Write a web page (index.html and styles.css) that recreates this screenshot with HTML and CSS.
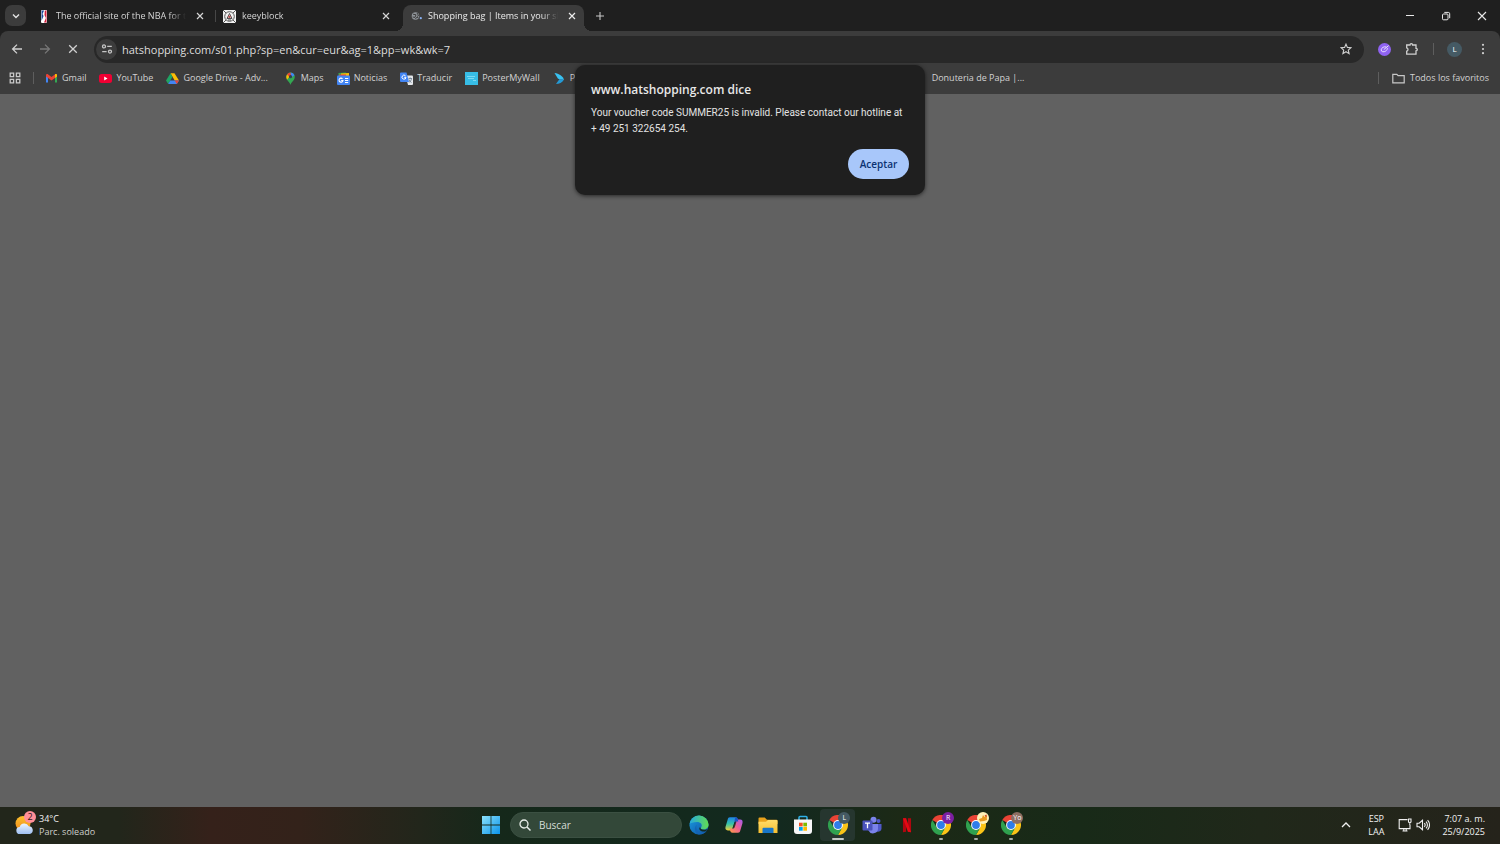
FILE: index.html
```html
<!DOCTYPE html>
<html lang="es">
<head>
<meta charset="utf-8">
<title>Shopping bag | Items in your shopping bag</title>
<link rel="stylesheet" href="styles.css">
</head>
<body>
<svg class="defs" aria-hidden="true">
  <defs>
    <linearGradient id="win" x1="0" y1="0" x2="1" y2="1"><stop offset="0" stop-color="#8be2fc"/><stop offset="1" stop-color="#0a93ea"/></linearGradient>
    <linearGradient id="edgeTop" x1="0" y1="0" x2="1" y2="0"><stop offset="0" stop-color="#25a8e0"/><stop offset="1" stop-color="#62dc4f"/></linearGradient>
    <linearGradient id="edgeLow" x1="0" y1="0" x2="1" y2="1"><stop offset="0" stop-color="#1b9de2"/><stop offset="1" stop-color="#0d4fa0"/></linearGradient>
    <linearGradient id="copA" x1="0" y1="0" x2="0" y2="1"><stop offset="0" stop-color="#1f83e6"/><stop offset=".5" stop-color="#35c3a8"/><stop offset="1" stop-color="#f2cf35"/></linearGradient>
    <linearGradient id="copB" x1="1" y1="0" x2="0" y2="1"><stop offset="0" stop-color="#a55cf0"/><stop offset=".5" stop-color="#ef5f92"/><stop offset="1" stop-color="#ff9f45"/></linearGradient>
    <linearGradient id="fold" x1="0" y1="0" x2="0" y2="1"><stop offset="0" stop-color="#ffdc6b"/><stop offset="1" stop-color="#f7bf2f"/></linearGradient>
    <linearGradient id="cloud" x1="0" y1="0" x2="0" y2="1"><stop offset="0" stop-color="#eef5ff"/><stop offset="1" stop-color="#9fc0f3"/></linearGradient>
    <linearGradient id="sun" x1="0" y1="0" x2="0" y2="1"><stop offset="0" stop-color="#fbc02d"/><stop offset="1" stop-color="#f28a1c"/></linearGradient>
  </defs>
  <symbol id="close" viewBox="0 0 10 10"><path d="M2 2l6 6M8 2l-6 6" fill="none" stroke="currentColor" stroke-width="1.2"/></symbol>
  <symbol id="chrome" viewBox="0 0 20 20">
    <path d="M10 10L1.3 5A10 10 0 0 1 18.7 5z" fill="#ea4335"/>
    <path d="M10 5.2H18.8A10 10 0 0 1 10 20L14.2 12.4z" fill="#fbc417"/>
    <path d="M1.3 5L5.8 12.4 10 14.8 14.200 12.600 10 20A10 10 0 0 1 1.3 5z" fill="#2fa14f"/>
    <circle cx="10" cy="10" r="4.9" fill="#fff"/><circle cx="10" cy="10" r="3.9" fill="#2f7de9"/>
  </symbol>
</svg>
<div class="screen">
  <header class="browser">
    <div class="tabstrip">
      <button class="tab-search" aria-label="Buscar pestañas"><svg viewBox="0 0 10 10" width="10" height="10"><path d="M2 3.6l3 3 3-3" fill="none" stroke="#e3e3e3" stroke-width="1.4"/></svg></button>
      <div class="tab">
        <svg class="favicon" viewBox="0 0 13 13"><rect x="3" y="0" width="6" height="13" rx="1" fill="#fff"/><path d="M3.500 .4h2.6L4.500 4l1 2-2 5z" fill="#1d4c9c"/><path d="M6.800.4h1.700v12H6L7.900 8 6.500 5z" fill="#d21f3c"/></svg>
        <span class="tab-title">The official site of the NBA for the latest</span>
        <button class="tab-close" aria-label="Cerrar"><svg width="10" height="10"><use href="#close"/></svg></button>
      </div>
      <div class="tab divided">
        <svg class="favicon" viewBox="0 0 13 13"><rect width="13" height="13" fill="#f1f1f1"/><circle cx="6.5" cy="6.5" r="4.8" fill="none" stroke="#555" stroke-width="1"/><path d="M0 0l3 3M13 0l-3 3M0 13l3-3M13 13l-3-3M4 8.5l2.5-5 2.5 5zM5 10h3" fill="none" stroke="#444" stroke-width=".9"/><circle cx="6.5" cy="6.8" r="1.3" fill="#b84b4b"/></svg>
        <span class="tab-title">keeyblock</span>
        <button class="tab-close" aria-label="Cerrar"><svg width="10" height="10"><use href="#close"/></svg></button>
      </div>
      <div class="tab active">
        <svg class="favicon" viewBox="0 0 13 13"><circle cx="5.5" cy="6" r="3.8" fill="#8f9499"/><path d="M3 4.2l3 .6L5 7.4 2.6 7M7 3l1.6 2.6L7 6.4M5.5 9l1-1.6 2 .4" fill="none" stroke="#3c3c3c" stroke-width="1"/><circle cx="10.8" cy="8.2" r="1.1" fill="#8ab4f8"/></svg>
        <span class="tab-title">Shopping bag | Items in your shopping bag</span>
        <button class="tab-close" aria-label="Cerrar"><svg width="10" height="10"><use href="#close"/></svg></button>
      </div>
      <button class="new-tab" aria-label="Nueva pestaña"><svg viewBox="0 0 10 10" width="10" height="10"><path d="M5 1v8M1 5h8" stroke="#c7c7c7" stroke-width="1.1"/></svg></button>
      <div class="window-controls">
        <button aria-label="Minimizar"><svg viewBox="0 0 10 10" width="10" height="10"><path d="M1 4.500h8" stroke="#e8e8e8"/></svg></button>
        <button aria-label="Restaurar"><svg viewBox="0 0 10 10" width="10" height="10"><rect x="1.5" y="3" width="5.5" height="5.8" rx="1" fill="none" stroke="#e8e8e8"/><path d="M3.3 1.4h4a1.4 1.4 0 0 1 1.4 1.4v4.4" fill="none" stroke="#e8e8e8"/></svg></button>
        <button aria-label="Cerrar"><svg viewBox="0 0 10 10" width="10" height="10"><path d="M1 1l8 8M9 1L1 9" stroke="#e8e8e8" stroke-width="1.1"/></svg></button>
      </div>
    </div>
    <div class="toolbar">
      <button class="nav" aria-label="Atrás"><svg viewBox="0 0 12 12" width="12" height="12"><path d="M11 6H2M6 1.6L1.6 6 6 10.4" fill="none" stroke="#d0d0d0" stroke-width="1.3"/></svg></button>
      <button class="nav" aria-label="Adelante"><svg viewBox="0 0 12 12" width="12" height="12"><path d="M1 6h9M6 1.6L10.4 6 6 10.4" fill="none" stroke="#777" stroke-width="1.3"/></svg></button>
      <button class="nav" aria-label="Detener"><svg viewBox="0 0 12 12" width="12" height="12"><path d="M2.2 2.2l7.6 7.6M9.8 2.2L2.2 9.8" stroke="#d0d0d0" stroke-width="1.3"/></svg></button>
      <div class="omnibox">
        <button class="site-info" aria-label="Información del sitio"><svg viewBox="0 0 12 12" width="12" height="12" fill="none" stroke="#c7c7c7" stroke-width="1.3"><circle cx="3" cy="3.4" r="1.5"/><path d="M6.2 3.4h4.6M1.2 8.6h4.4"/><circle cx="9" cy="8.6" r="1.5"/></svg></button>
        <input class="url" aria-label="Dirección" value="hatshopping.com/s01.php?sp=en&amp;cur=eur&amp;ag=1&amp;pp=wk&amp;wk=7">
        <button class="star" aria-label="Añadir a favoritos"><svg viewBox="0 0 12 12" width="12" height="12"><path d="M6 1.1l1.4 3.3 3.6.3-2.7 2.4.8 3.5L6 8.7l-3.1 1.9.8-3.5L1 4.7l3.6-.3z" fill="none" stroke="#d0d0d0" stroke-width="1.1"/></svg></button>
      </div>
      <button class="tool" aria-label="Extensión"><svg viewBox="0 0 13 13" width="13" height="13"><circle cx="6.5" cy="6.5" r="6.5" fill="#9063f2"/><path d="M10.600 2.600L5.800 6.600M8.200 4c-2.200-.8-4.800.8-5 2.800-.2 2.200 2.800 2.600 4.600 1.200 1-.8 1.800-2 1.600-3" fill="none" stroke="#e9dfff" stroke-width="1"/></svg></button>
      <button class="tool" aria-label="Extensiones"><svg viewBox="0 0 14 14" width="14" height="14"><path d="M1.700 3h3.300a1.300 1.300 0 0 1 2.600 0H11v3.300a1.300 1.300 0 0 1 0 2.600v3.300H1.700V9.200a1.700 1.700 0 0 0 0-3.300z" fill="none" stroke="#d0d0d0" stroke-width="1.300"/></svg></button>
      <span class="rule"></span>
      <button class="avatar" aria-label="Perfil">L</button>
      <button class="more" aria-label="Menú"><svg viewBox="0 0 12 12" width="12" height="12" fill="#d0d0d0"><circle cx="6" cy="1.800" r="1.100"/><circle cx="6" cy="6" r="1.100"/><circle cx="6" cy="10.200" r="1.100"/></svg></button>
    </div>
    <nav class="bookmarks">
      <button class="apps" aria-label="Aplicaciones"><svg viewBox="0 0 12 12" width="12" height="12" fill="none" stroke="#c7c7c7" stroke-width="1.300"><path d="M1.200 1.200h3.400v3.400H1.200zM7.400 1.200h3.400v3.400H7.400zM1.200 7.400h3.400v3.400H1.200zM7.400 7.400h3.400v3.400H7.400z"/></svg></button>
      <span class="rule"></span>
      <a class="mark" href="#"><svg viewBox="0 0 13 13"><path d="M1 10.500V3.500l2 1.500v5.500z" fill="#4285f4"/><path d="M12 10.500V3.500L10 5v5.500z" fill="#34a853"/><path d="M1 4.500V3.300C1 2 2.400 1.800 3.200 2.400L6.500 5l3.300-2.600c.8-.6 2.200-.4 2.200.9v1.200L6.500 8.500z" fill="#ea4335"/><path d="M10 2.300c.9-.6 2-.2 2 1v1.200L10 6z" fill="#fbbc04"/></svg>Gmail</a>
      <a class="mark" href="#"><svg viewBox="0 0 13 13"><rect y="2" width="13" height="9" rx="2.500" fill="#f00033"/><path d="M5.200 4.600v3.800L8.500 6.500z" fill="#fff"/></svg>YouTube</a>
      <a class="mark last-wide" href="#"><svg viewBox="0 0 13 13"><path d="M4.500 1.200h4L13 8.500H8.700z" fill="#fbbc04"/><path d="M4.500 1.200L6.500 4.700 2.200 12 0 8.600z" fill="#1fa463"/><path d="M4.200 8.500H13L10.800 12H2.200z" fill="#4285f4"/><path d="M8.700 8.500H13L10.800 12z" fill="#ea4335"/></svg>Google Drive - Adv...</a>
      <a class="mark" href="#"><svg viewBox="0 0 13 13"><path d="M6.500 13C6 10 2.200 8.600 2.200 4.800A4.300 4.300 0 0 1 10.800 4.800C10.800 8.600 7 10 6.500 13z" fill="#34a853"/><path d="M6.500.5a4.300 4.300 0 0 1 4 2.800L6.500 6z" fill="#4285f4"/><path d="M3 2.400A4.300 4.300 0 0 1 6.500.5L7 4 5 6z" fill="#ea4335"/><path d="M3 2.400l2.400 2.300-2.400 3a5 5 0 0 1 0-5.300z" fill="#fbbc04"/><circle cx="6.500" cy="4.700" r="1.600" fill="#35424a"/></svg>Maps</a>
      <a class="mark" href="#"><svg viewBox="0 0 13 13"><path d="M1.500 1l7-.6 3 1.600V6h-10z" fill="#34a853"/><path d="M4 1.500l8-.5v4H4z" fill="#fbbc04"/><path d="M2 2.500h7V5H2z" fill="#ea4335"/><rect y="3.500" width="13" height="9.500" rx="1" fill="#4285f4"/><path d="M5.500 6.800A2 2 0 1 0 6 8.500H4.200M8 6.500h3.200M8 8.500h3.200M8 10.500h3.200" fill="none" stroke="#fff" stroke-width="1.100"/></svg>Noticias</a>
      <a class="mark" href="#"><svg viewBox="0 0 13 13"><path d="M5.500 3.500H12a1 1 0 0 1 1 1V12a1 1 0 0 1-1 1H8z" fill="#e4e7eb"/><path d="M8.500 6.500h3.500M10.200 5.500v1M9 7.500c.4 1.400 1.300 2.300 2.500 3M11.600 6.500c-.3 2-1.600 3.400-2.800 4" fill="none" stroke="#68798b" stroke-width=".8"/><path d="M1 .5h5.500l2.500 9.500H1a1 1 0 0 1-1-1V1.500a1 1 0 0 1 1-1z" fill="#4285f4"/><path d="M5.500 3.800A2 2 0 1 0 6 5.300H4.200" fill="none" stroke="#fff"/></svg>Traducir</a>
      <a class="mark" href="#"><svg viewBox="0 0 13 13"><rect width="13" height="13" fill="#37bde6"/><path d="M2 4.500h8M3 6.500h6M8 8.500h3" stroke="#8de0f6" stroke-width=".8"/></svg>PosterMyWall</a>
      <a class="mark covered" href="#"><svg viewBox="0 0 13 13"><path d="M1.500 1C6 1.500 10 4 11 8L5 6.800z" fill="#39c2f1"/><path d="M11 7.500C9.500 10.500 6 12 3 12L6.500 7z" fill="#2499d4"/></svg>Po</a>
      <a class="mark donut" href="#">Donuteria de Papa |...</a>
      <span class="rule end"></span>
      <button class="all"><svg viewBox="0 0 13 13" width="13" height="13"><path d="M.8 2.300h4l1.300 1.400h6.100v7.200H.8z" fill="none" stroke="#c7c7c7" stroke-width="1.200"/></svg>Todos los favoritos</button>
    </nav>
  </header>

  <main class="page"></main>

  <footer class="taskbar">
    <button class="weather">
      <span class="weather-icon">
        <svg viewBox="0 0 20 20" width="20" height="20"><circle cx="8" cy="8.500" r="7.500" fill="url(#sun)"/><path d="M5 19a3.500 3.500 0 0 1-.3-7 4.800 4.800 0 0 1 9-.8A4 4 0 0 1 15 19z" fill="url(#cloud)"/></svg>
        <span class="count">2</span>
      </span>
      <span class="weather-text"><span>34°C</span><span class="dim">Parc. soleado</span></span>
    </button>
    <div class="dock">
      <button class="app start" aria-label="Inicio"><svg viewBox="0 0 18 18" width="18" height="18" fill="url(#win)"><path d="M0 0h8.600v8.600H0zM9.400 0H18v8.600H9.400zM0 9.400h8.600V18H0zM9.400 9.400H18V18H9.400z"/></svg></button>
      <label class="search"><svg viewBox="0 0 12 12" width="12" height="12"><circle cx="5" cy="5" r="4" fill="none" stroke="#e8eee9" stroke-width="1.300"/><path d="M8 8l3.500 3.500" stroke="#e8eee9" stroke-width="1.500"/></svg><input aria-label="Buscar" placeholder="Buscar"></label>
      <div class="apps-row">
        <button class="app" aria-label="Edge"><svg viewBox="0 0 20 20" width="20" height="20"><circle cx="10" cy="10" r="9.600" fill="url(#edgeLow)"/><path d="M.5 9A9.600 9.600 0 0 1 19.600 9.500c0 3.300-2.600 5-5.200 5-1.800 0-3.200-.9-2.300-2.100C14 9.500 11.500 7 8 7 4.500 7 1.500 8 .5 9z" fill="url(#edgeTop)"/><path d="M8 9.500c-2 3.500.5 8 5 8 2 0 3.600-.5 5-2a9.600 9.600 0 0 1-8 4.100C6.500 19 4 13 8 9.500z" fill="#1464b4"/><path d="M11.200 12c-.6 2.200 3.300 3.900 7.400 2-1 2.200-3.400 3-5.800 2.300-2.200-.7-3.400-2.800-1.600-4.300z" fill="#142c24"/></svg></button>
        <button class="app" aria-label="Copilot"><svg viewBox="0 0 20 20" width="18" height="18"><path d="M5.500 1.500h6.300c1.400 0 2 .9 2.400 2.200L15 6h-2.500c-1.400 0-2 1-2.400 2.300L8.300 14c-.4 1.300-1 2-2.300 2H3.200C.8 16 0 14.200.6 12L3 4c.4-1.500 1-2.500 2.500-2.500z" fill="url(#copA)"/><path d="M14.500 18.500H8.200c-1.400 0-2-.9-2.400-2.200L5 14h2.500c1.400 0 2-1 2.400-2.300L11.700 6c.4-1.300 1-2 2.300-2h2.800c2.400 0 3.200 1.800 2.600 4L17 16c-.4 1.500-1 2.500-2.500 2.500z" fill="url(#copB)"/><path d="M11.800 1.500c1.400 0 2 .9 2.400 2.200L14.800 6h-2.500c-1 0-1.600.8-2 1.700L11 3z" fill="#1c52c8"/><path d="M8.700 12.500L10.500 7c.3-.8.700-1 1.500-1h.8L11 12c-.4 1.300-1 2-2 2H8.200z" fill="#14281f" opacity=".8"/></svg></button>
        <button class="app" aria-label="Explorador"><svg viewBox="0 0 20 20" width="20" height="20"><path d="M.5 3.500a1 1 0 0 1 1-1h5.200L9 4.800h9.500a1 1 0 0 1 1 1V9H.5z" fill="#e9a21c"/><path d="M.5 6.800H8L10 5h8.500a1 1 0 0 1 1 1v12H.5z" fill="url(#fold)"/><path d="M4.500 18v-4.300a1 1 0 0 1 1-1h9a1 1 0 0 1 1 1V18z" fill="#1876c8"/></svg></button>
        <button class="app" aria-label="Tienda"><svg viewBox="0 0 20 20" width="20" height="20"><path d="M6 5V2.500a1 1 0 0 1 1-1h6a1 1 0 0 1 1 1V5" fill="none" stroke="#2fb1e8" stroke-width="1.500"/><path d="M1 4.500h18V16a3 3 0 0 1-3 3H4a3 3 0 0 1-3-3z" fill="#f7f7f7"/><path d="M6 7.700h3.700v3.700H6z" fill="#f25022"/><path d="M10.300 7.700H14v3.700h-3.700z" fill="#7fba00"/><path d="M6 12h3.700v3.700H6z" fill="#00a4ef"/><path d="M10.300 12H14v3.700h-3.700z" fill="#ffb900"/></svg></button>
        <button class="app current" aria-label="Chrome L"><svg width="20" height="20"><use href="#chrome"/></svg><span class="badge slate">L</span></button>
        <button class="app" aria-label="Teams"><svg viewBox="0 0 20 20" width="20" height="20"><circle cx="16.500" cy="6" r="2" fill="#5059c9"/><path d="M13 9h6.500v4.500a3.300 3.300 0 0 1-5 2.800z" fill="#5059c9"/><circle cx="11.500" cy="4.800" r="3" fill="#7b83eb"/><path d="M6.500 9H16v5a5 5 0 0 1-9.500 1.500z" fill="#7b83eb"/><rect x=".5" y="5.500" width="10" height="10" rx="1" fill="#4b53bc"/><path d="M3 8.200h5M5.500 8.200v5" stroke="#fff" stroke-width="1.300"/></svg></button>
        <button class="app" aria-label="Netflix"><svg viewBox="0 0 20 20" width="18" height="18"><path d="M5.500 2.500H9v15l-3.500.5zM11 2.500h3.500V18L11 17.500z" fill="#b1060f"/><path d="M5.500 2.500H9L14.500 18l-3.500-.5z" fill="#e50914"/></svg></button>
        <button class="app open" aria-label="Chrome R"><svg width="20" height="20"><use href="#chrome"/></svg><span class="badge purple">R</span></button>
        <button class="app open" aria-label="Chrome"><svg width="20" height="20"><use href="#chrome"/></svg><span class="badge cream"><svg viewBox="0 0 12 12" width="12" height="12"><path d="M2 7l3-1 1-3 1.500 2L9.500 3l.5 5-3 1-4 .5z" fill="#e89a20"/><path d="M7.500 3.500l2-1 .3 3z" fill="#d2452c"/></svg></span></button>
        <button class="app open" aria-label="Chrome Yo"><svg width="20" height="20"><use href="#chrome"/></svg><span class="badge brown">Yo</span></button>
      </div>
    </div>
    <div class="tray">
      <button class="chevron" aria-label="Iconos ocultos"><svg viewBox="0 0 10 10" width="10" height="10"><path d="M1 7l4-4 4 4" fill="none" stroke="#f0f0f0" stroke-width="1.300"/></svg></button>
      <button class="lang"><span>ESP</span><span>LAA</span></button>
      <button class="status" aria-label="Red y volumen">
        <svg viewBox="0 0 14 14" width="14" height="14" fill="none" stroke="#f0f0f0" stroke-width="1.100"><path d="M9.500 1.600H1.200v9H12V7M4.500 13h5M5.800 10.600V13M8.200 10.600V13M10.500 1h2.500v3l-1.200 1-1.300-1zM11.800 5v2"/></svg>
        <svg viewBox="0 0 14 14" width="14" height="14" fill="none" stroke="#f0f0f0" stroke-width="1.100"><path d="M1 5.200h2.200L6.500 2.300v9.400L3.200 8.800H1zM8.300 5.200a2.600 2.600 0 0 1 0 3.600M10 3.600a4.800 4.800 0 0 1 0 6.800M11.600 2.200a7 7 0 0 1 0 9.600"/></svg>
      </button>
      <button class="clock"><span>7:07 a. m.</span><span>25/9/2025</span></button>
    </div>
  </footer>

  <section class="dialog" role="alertdialog" aria-labelledby="dlg-title" aria-describedby="dlg-text">
    <h1 id="dlg-title">www.hatshopping.com dice</h1>
    <p id="dlg-text">Your voucher code SUMMER25 is invalid. Please contact our hotline at<br>+ 49 251 322654 254.</p>
    <button class="accept">Aceptar</button>
  </section>
</div>
</body>
</html>
```

FILE: styles.css
```css
* { box-sizing: border-box; }
body { margin: 0; font-family: "Open Sans", "Noto Sans", sans-serif; font-size: 9px; line-height: 14px; color: #e3e3e3; }
button, input { font: inherit; color: inherit; background: none; border: 0; padding: 0; margin: 0; outline: 0; }
button { display: flex; align-items: center; justify-content: center; flex: none; }
svg { display: block; flex: none; }
.defs { position: absolute; width: 0; height: 0; }
.screen { position: relative; display: flex; flex-direction: column; height: 100vh; overflow: hidden; }
.browser { background: #1f1f1f; }

.tabstrip { display: flex; align-items: flex-end; height: 31px; padding-left: 5px; }
.tab-search { width: 21px; height: 21px; margin: 0 5px 5px 0; border-radius: 7px; background: #3c3c3c; }
.tab { position: relative; display: flex; align-items: center; width: 181px; height: 26px; padding: 0 7px 4px 7px; margin-right: 5px; }
.tab.divided { padding-left: 6px; }
.tab.divided::before { content: ""; position: absolute; left: -2px; top: 5px; width: 1px; height: 12px; background: #474747; }
.favicon { width: 13px; height: 13px; margin-right: 5px; }
.divided .favicon { margin-right: 6px; }
.tab-title { flex: 1; min-width: 0; overflow: hidden; white-space: nowrap; margin-right: 9px; mask-image: linear-gradient(90deg, #000 87%, transparent); color: #d5d5d5; }
.tab-close { width: 10px; height: 10px; color: #d5d5d5; }
.tab.active { background: #3c3c3c; border-radius: 8px 8px 0 0; }
.tab.active .tab-title, .tab.active .tab-close { color: #ececec; }
.tab.active::before, .tab.active::after { content: ""; position: absolute; bottom: 0; width: 8px; height: 8px; }
.tab.active::before { left: -8px; background: radial-gradient(circle at 0 0, transparent 8px, #3c3c3c 8px); }
.tab.active::after { right: -8px; background: radial-gradient(circle at 100% 0, transparent 8px, #3c3c3c 8px); }
.new-tab { width: 20px; height: 20px; margin: 0 0 5px 1px; }
.window-controls { display: flex; align-self: stretch; margin-left: auto; }
.window-controls button { width: 36px; height: 31px; }

.toolbar { display: flex; align-items: center; height: 36px; padding: 0 7px; border-radius: 8px 8px 0 0; background: #3c3c3c; }
.nav { width: 20px; height: 20px; margin-right: 8px; }
.omnibox { display: flex; align-items: center; flex: 1; height: 27px; margin-left: 3px; margin-right: 13px; padding: 0 12px 0 2px; border-radius: 14px; background: #282828; }
.site-info { width: 21px; height: 21px; border-radius: 50%; background: #3c3c3c; }
.url { flex: 1; min-width: 0; height: 20px; margin-left: 5px; font-size: 11px; color: #dedede; }
.tool { width: 14px; height: 14px; margin-right: 14px; }
.rule { width: 1px; height: 12px; background: #5e5e5e; }
.avatar { width: 15px; height: 15px; margin: 0 15px 0 13px; border-radius: 50%; background: #455a64; font-size: 8px; color: #fff; }
.more { width: 12px; height: 14px; margin-right: 4px; }

.bookmarks { display: flex; align-items: center; height: 27px; padding: 0 11px 5px 9px; background: #3c3c3c; color: #d2d2d2; }
.apps { width: 12px; height: 12px; margin-right: 12px; }
.bookmarks .rule { margin-right: 11px; }
.mark { display: flex; align-items: center; gap: 4px; margin-right: 13px; color: inherit; text-decoration: none; white-space: nowrap; }
.mark svg { width: 13px; height: 13px; }
.mark.last-wide { margin-right: 16px; }
.mark.covered { width: 366px; }
.bookmarks .rule.end { margin-left: auto; margin-right: 13px; }
.all { gap: 5px; }

.page { flex: 1; background: #616161; }

.taskbar { display: grid; grid-template-columns: 1fr auto 1fr; align-items: center; height: 37px; padding-bottom: 1px; color: #f2f2f2; background: linear-gradient(90deg, #22261b 0, #22261b 8%, #35211a 14%, #33221a 20%, #22261b 28%, #15281a 33%, #13291d 46%, #13291f 52%, #1c2916 60%, #182a18 72%, #20281a 84%, #25231b 100%); }
.weather { justify-self: start; gap: 4px; margin-left: 15px; text-align: left; line-height: 13px; }
.weather-icon { position: relative; }
.count { position: absolute; top: -4px; right: -1px; width: 12px; height: 12px; border-radius: 50%; background: #ff8f98; color: #33151a; line-height: 12px; text-align: center; }
.weather-text, .lang, .clock { display: flex; flex-direction: column; }
.dim { color: #cfcfcb; }
.dock { display: flex; align-items: center; padding-left: 2px; }
.app { position: relative; flex: 1; height: 32px; border-radius: 4px; }
.app.start { flex: none; width: 34px; margin-right: 2px; }
.search { display: flex; align-items: center; gap: 8px; width: 172px; height: 26px; padding: 0 8px; border: 1px solid #3b5042; border-radius: 13px; background: #334839; }
.search input { flex: 1; min-width: 0; font-size: 10px; }
.search input::placeholder { color: #d5ddd6; opacity: 1; }
.apps-row { display: flex; width: 346px; }
.current { background: #26362f; }
.current::after, .open::after { content: ""; position: absolute; bottom: 1px; left: 50%; width: 4px; height: 2px; margin-left: -2px; border-radius: 1px; background: #a7aca7; }
.current::after { width: 12px; margin-left: -6px; background: #c5cac6; }
.badge { position: absolute; top: 3px; left: 18px; display: flex; align-items: center; justify-content: center; width: 12px; height: 12px; border-radius: 50%; font-size: 7px; line-height: 12px; color: #fff; }
.slate { background: #455a64; }
.purple { background: #7b1fa2; }
.cream { background: #fff1b8; }
.brown { background: #8d6e63; }
.tray { display: flex; align-items: center; justify-self: end; margin-right: 15px; line-height: 13px; }
.chevron { width: 10px; margin-right: 17px; }
.lang { margin-right: 14px; }
.status { gap: 4px; margin-right: 12px; }
.clock { align-items: flex-end; }

.dialog { position: absolute; top: 65px; left: 50%; width: 350px; margin-left: -175px; padding: 16px; border-radius: 10px; background: #1f1f1f; box-shadow: 0 1px 4px rgba(0, 0, 0, .6); }
.dialog h1 { margin: 0; font-size: 12px; line-height: 18px; font-weight: 600; color: #e8e8e8; }
.dialog p { margin: 6px 0 12px; font-family: Roboto, "Open Sans", sans-serif; font-size: 10px; line-height: 16px; }
.accept { width: 61px; height: 30px; margin-left: auto; border-radius: 15px; background: #a8c7fa; color: #0b3272; font-size: 10px; font-weight: 600; }
```
